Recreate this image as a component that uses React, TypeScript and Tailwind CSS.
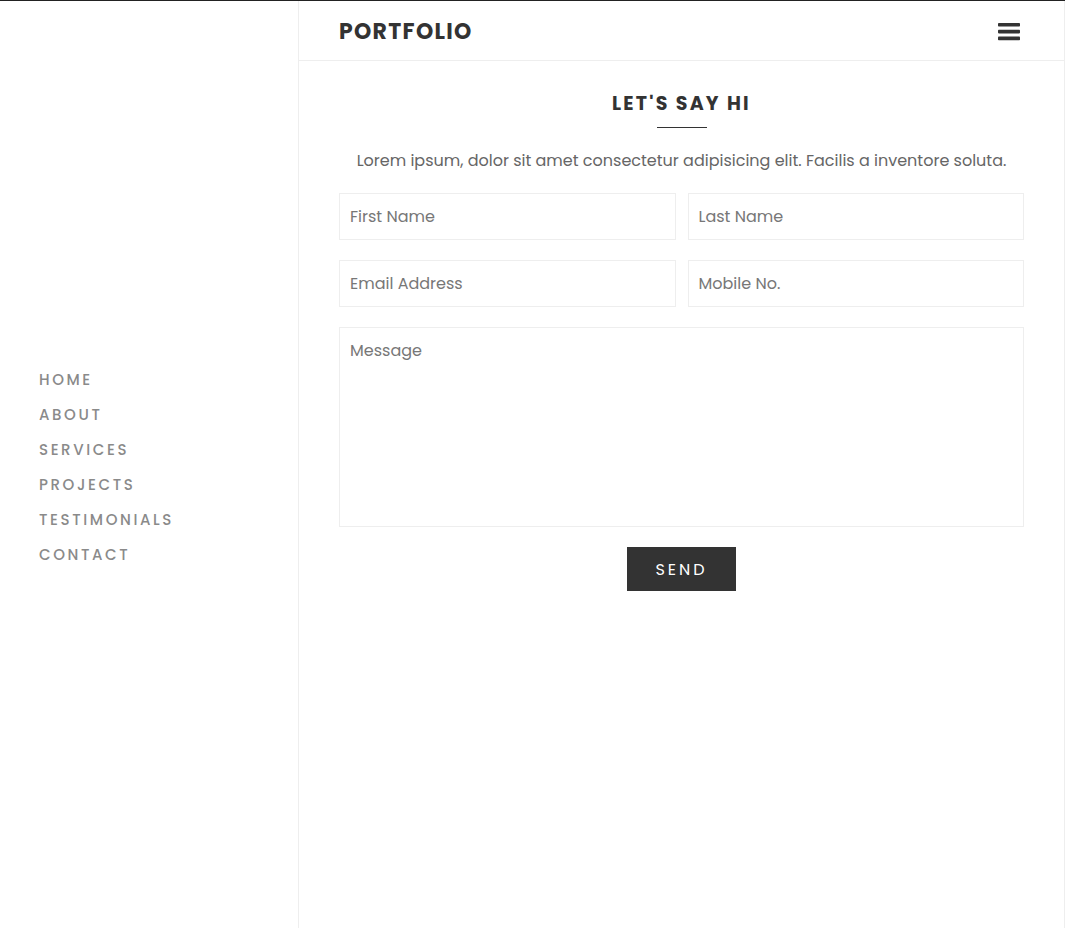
export default function App() {
  const links = ["HOME", "ABOUT", "SERVICES", "PROJECTS", "TESTIMONIALS", "CONTACT"];

  return (
    <div className="flex h-screen w-full border-t border-[#222] bg-white font-['Poppins','Open_Sans',sans-serif] text-[#333]">
      {/* SIDEBAR */}
      <aside className="flex w-[298px] shrink-0 flex-col justify-center pl-[39px] pt-[4px]">
        <ul className="flex flex-col gap-[12px]">
          {links.map((l) => (
            <li key={l} className="text-[15px] leading-[23px] font-medium tracking-[2.6px] text-[#8a8a8a]">
              {l}
            </li>
          ))}
        </ul>
      </aside>

      {/* MAIN */}
      <main className="flex flex-1 flex-col border-x border-[#eee]">
        <header className="flex h-[60px] items-center justify-between border-b border-[#eee] px-10 pt-[2px]">
          <h1 className="text-[22px] font-bold tracking-[1.3px] text-[#333]">PORTFOLIO</h1>
          <svg width="22" height="18" viewBox="0 0 22 18" className="mr-1">
            <rect x="0" y="0" width="22" height="3.6" rx="0.8" fill="#333" />
            <rect x="0" y="6.8" width="22" height="3.6" rx="0.8" fill="#333" />
            <rect x="0" y="13.6" width="22" height="3.6" rx="0.8" fill="#333" />
          </svg>
        </header>

        <section className="px-10 pt-[29px] text-center">
          <h2 className="text-[19px] leading-[28px] font-bold tracking-[2.2px]">LET'S SAY HI</h2>
          <div className="mx-auto mt-[9px] h-px w-[50px] bg-[#333]" />
          <p className="mt-[21px] text-[16px] leading-[24px] text-[#666]">
            Lorem ipsum, dolor sit amet consectetur adipisicing elit. Facilis a inventore soluta.
          </p>

          <form className="mt-[20px] flex flex-col gap-5">
            <div className="grid grid-cols-2 gap-x-3 gap-y-5">
              <input
                placeholder="First Name"
                className="h-[47px] border border-[#eee] px-[10px] text-[16px] outline-none placeholder:text-[#777]"
              />
              <input
                placeholder="Last Name"
                className="h-[47px] border border-[#eee] px-[10px] text-[16px] outline-none placeholder:text-[#777]"
              />
              <input
                placeholder="Email Address"
                className="h-[47px] border border-[#eee] px-[10px] text-[16px] outline-none placeholder:text-[#777]"
              />
              <input
                placeholder="Mobile No."
                className="h-[47px] border border-[#eee] px-[10px] text-[16px] outline-none placeholder:text-[#777]"
              />
            </div>
            <textarea
              placeholder="Message"
              className="h-[200px] resize-none border border-[#eee] px-[10px] pt-[11px] text-[16px] outline-none placeholder:text-[#777]"
            />
            <div>
              <button
                type="button"
                className="h-[44px] w-[109px] bg-[#333] pt-[2px] text-[16px] tracking-[3px] text-white"
              >
                SEND
              </button>
            </div>
          </form>
        </section>
      </main>
    </div>
  );
}
